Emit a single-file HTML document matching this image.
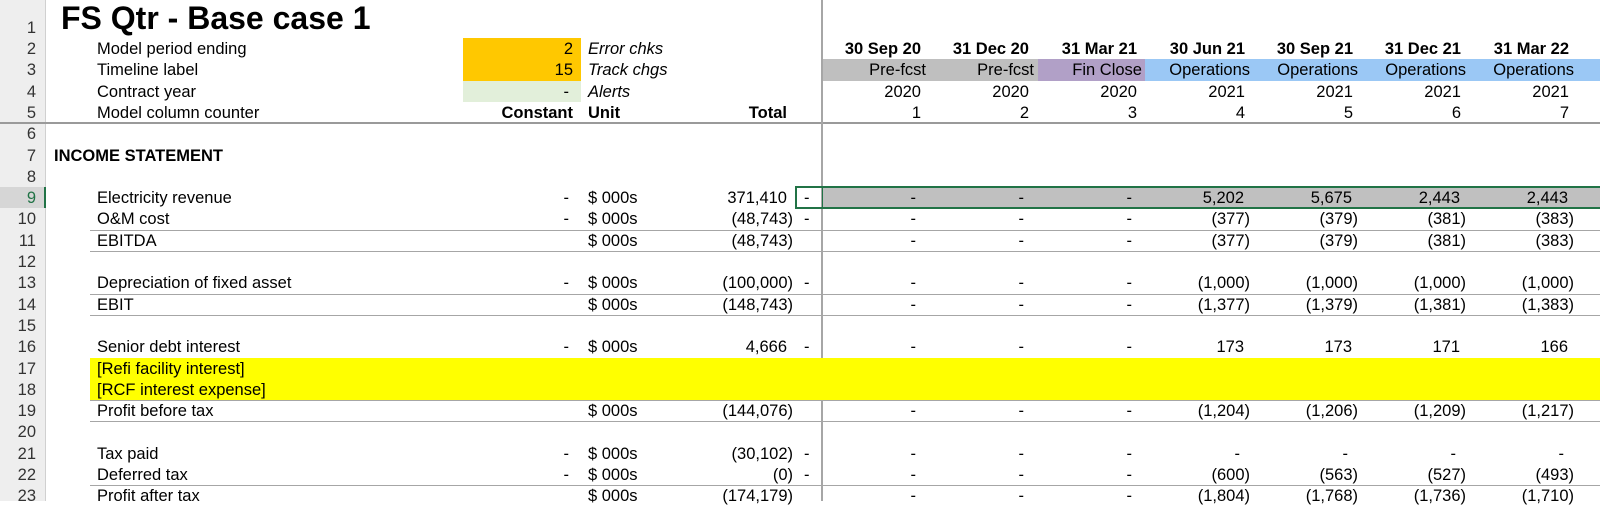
<!DOCTYPE html>
<html><head><meta charset="utf-8"><style>
*{margin:0;padding:0;box-sizing:border-box}
body{width:1600px;height:501px;overflow:hidden;background:#fff;font-family:"Liberation Sans",Arial,sans-serif;font-size:16.5px;color:#000;position:relative}
.a{position:absolute}
.row{position:absolute;left:0;width:1600px;height:21.3px}
.row>span{position:absolute;top:0;line-height:22px;white-space:nowrap}
.h{left:0;width:46px;text-align:right;padding-right:10px;color:#333}
.b{left:97px}.u{left:588px}.d{left:804px}
.k{right:1021px}.t{right:807px}
.n1{right:674px}.n2{right:566px}.n3{right:458px}.n4{right:350px}.n5{right:242px}.n6{right:134px}.n7{right:26px}
.p{margin-right:6px}.z{margin-right:10px}.q{margin-right:5px}
.bo{font-weight:bold}.it{font-style:italic}
.ln{position:absolute;left:90px;width:1510px;height:1px;background:#a6a6a6}
</style></head><body>
<div class="a" style="left:0;top:0;width:46px;height:501px;background:#eeeeee;border-right:1px solid #d0d0d0"></div>
<div class="a" style="left:0;top:187px;width:46px;height:21.3px;background:#d6d6d6;border-right:2px solid #217346"></div>
<div class="a" style="left:463px;top:38px;width:118px;height:42.6px;background:#ffc800"></div>
<div class="a" style="left:463px;top:80.6px;width:118px;height:21.3px;background:#e2efda"></div>
<div class="a" style="left:823px;top:59.3px;width:215px;height:21.3px;background:#bfbfbf"></div>
<div class="a" style="left:1038px;top:59.3px;width:107px;height:21.3px;background:#b1a0c7"></div>
<div class="a" style="left:1145px;top:59.3px;width:455px;height:21.3px;background:#9bc8f5"></div>
<div class="a" style="left:823px;top:187px;width:777px;height:21.3px;background:#c0c0c0"></div>
<div class="a" style="left:0;top:122px;width:1600px;height:2px;background:#9a9a9a"></div>
<div class="ln" style="top:229.7px"></div><div class="ln" style="top:251px"></div>
<div class="ln" style="top:293.6px"></div><div class="ln" style="top:314.9px"></div>
<div class="ln" style="top:400.1px"></div><div class="ln" style="top:421.4px"></div>
<div class="ln" style="top:485.3px"></div>
<div class="a" style="left:821px;top:0;width:2px;height:501px;background:#a6a6a6"></div>
<div class="a" style="left:90px;top:357.5px;width:1510px;height:42.6px;background:#ffff00"></div>
<div class="a" style="left:795px;top:186px;width:810px;height:23px;border:2px solid #217346"></div>
<div class="a" style="left:822px;top:188px;width:1px;height:19px;background:#217346"></div>

<div class="row" style="top:0;height:38px"><span class="h" style="top:17px">1</span><span class="bo" style="left:61px;top:0px;font-size:32px;line-height:36px">FS Qtr - Base case 1</span></div>

<div class="row" style="top:38px"><span class="h">2</span><span class="b">Model period ending</span><span class="k p">2</span><span class="u it">Error chks</span>
<span class="n1 bo q">30 Sep 20</span><span class="n2 bo q">31 Dec 20</span><span class="n3 bo q">31 Mar 21</span><span class="n4 bo q">30 Jun 21</span><span class="n5 bo q">30 Sep 21</span><span class="n6 bo q">31 Dec 21</span><span class="n7 bo q">31 Mar 22</span></div>

<div class="row" style="top:59.3px"><span class="h">3</span><span class="b">Timeline label</span><span class="k p">15</span><span class="u it">Track chgs</span>
<span class="n1">Pre-fcst</span><span class="n2">Pre-fcst</span><span class="n3">Fin Close</span><span class="n4">Operations</span><span class="n5">Operations</span><span class="n6">Operations</span><span class="n7">Operations</span></div>

<div class="row" style="top:80.6px"><span class="h">4</span><span class="b">Contract year</span><span class="k z">-</span><span class="u it">Alerts</span>
<span class="n1 q">2020</span><span class="n2 q">2020</span><span class="n3 q">2020</span><span class="n4 q">2021</span><span class="n5 q">2021</span><span class="n6 q">2021</span><span class="n7 q">2021</span></div>

<div class="row" style="top:101.9px"><span class="h">5</span><span class="b">Model column counter</span><span class="k p bo">Constant</span><span class="u bo">Unit</span><span class="t p bo">Total</span>
<span class="n1 q">1</span><span class="n2 q">2</span><span class="n3 q">3</span><span class="n4 q">4</span><span class="n5 q">5</span><span class="n6 q">6</span><span class="n7 q">7</span></div>

<div class="row" style="top:123.2px"><span class="h">6</span></div>
<div class="row" style="top:144.5px"><span class="h">7</span><span class="bo" style="left:54px">INCOME STATEMENT</span></div>
<div class="row" style="top:165.8px"><span class="h">8</span></div>

<div class="row" style="top:187.1px"><span class="h" style="color:#217346">9</span><span class="b">Electricity revenue</span><span class="k z">-</span><span class="u">$ 000s</span><span class="t p">371,410</span><span class="d">-</span>
<span class="n1 z">-</span><span class="n2 z">-</span><span class="n3 z">-</span><span class="n4 p">5,202</span><span class="n5 p">5,675</span><span class="n6 p">2,443</span><span class="n7 p">2,443</span></div>

<div class="row" style="top:208.4px"><span class="h">10</span><span class="b">O&amp;M cost</span><span class="k z">-</span><span class="u">$ 000s</span><span class="t">(48,743)</span><span class="d">-</span>
<span class="n1 z">-</span><span class="n2 z">-</span><span class="n3 z">-</span><span class="n4">(377)</span><span class="n5">(379)</span><span class="n6">(381)</span><span class="n7">(383)</span></div>

<div class="row" style="top:229.7px"><span class="h">11</span><span class="b">EBITDA</span><span class="u">$ 000s</span><span class="t">(48,743)</span>
<span class="n1 z">-</span><span class="n2 z">-</span><span class="n3 z">-</span><span class="n4">(377)</span><span class="n5">(379)</span><span class="n6">(381)</span><span class="n7">(383)</span></div>

<div class="row" style="top:251px"><span class="h">12</span></div>

<div class="row" style="top:272.3px"><span class="h">13</span><span class="b">Depreciation of fixed asset</span><span class="k z">-</span><span class="u">$ 000s</span><span class="t">(100,000)</span><span class="d">-</span>
<span class="n1 z">-</span><span class="n2 z">-</span><span class="n3 z">-</span><span class="n4">(1,000)</span><span class="n5">(1,000)</span><span class="n6">(1,000)</span><span class="n7">(1,000)</span></div>

<div class="row" style="top:293.6px"><span class="h">14</span><span class="b">EBIT</span><span class="u">$ 000s</span><span class="t">(148,743)</span>
<span class="n1 z">-</span><span class="n2 z">-</span><span class="n3 z">-</span><span class="n4">(1,377)</span><span class="n5">(1,379)</span><span class="n6">(1,381)</span><span class="n7">(1,383)</span></div>

<div class="row" style="top:314.9px"><span class="h">15</span></div>

<div class="row" style="top:336.2px"><span class="h">16</span><span class="b">Senior debt interest</span><span class="k z">-</span><span class="u">$ 000s</span><span class="t p">4,666</span><span class="d">-</span>
<span class="n1 z">-</span><span class="n2 z">-</span><span class="n3 z">-</span><span class="n4 p">173</span><span class="n5 p">173</span><span class="n6 p">171</span><span class="n7 p">166</span></div>

<div class="row" style="top:357.5px"><span class="h">17</span><span class="b">[Refi facility interest]</span></div>
<div class="row" style="top:378.8px"><span class="h">18</span><span class="b">[RCF interest expense]</span></div>

<div class="row" style="top:400.1px"><span class="h">19</span><span class="b">Profit before tax</span><span class="u">$ 000s</span><span class="t">(144,076)</span>
<span class="n1 z">-</span><span class="n2 z">-</span><span class="n3 z">-</span><span class="n4">(1,204)</span><span class="n5">(1,206)</span><span class="n6">(1,209)</span><span class="n7">(1,217)</span></div>

<div class="row" style="top:421.4px"><span class="h">20</span></div>

<div class="row" style="top:442.7px"><span class="h">21</span><span class="b">Tax paid</span><span class="k z">-</span><span class="u">$ 000s</span><span class="t">(30,102)</span><span class="d">-</span>
<span class="n1 z">-</span><span class="n2 z">-</span><span class="n3 z">-</span><span class="n4 z">-</span><span class="n5 z">-</span><span class="n6 z">-</span><span class="n7 z">-</span></div>

<div class="row" style="top:464px"><span class="h">22</span><span class="b">Deferred tax</span><span class="k z">-</span><span class="u">$ 000s</span><span class="t">(0)</span><span class="d">-</span>
<span class="n1 z">-</span><span class="n2 z">-</span><span class="n3 z">-</span><span class="n4">(600)</span><span class="n5">(563)</span><span class="n6">(527)</span><span class="n7">(493)</span></div>

<div class="row" style="top:485.3px"><span class="h">23</span><span class="b">Profit after tax</span><span class="u">$ 000s</span><span class="t">(174,179)</span>
<span class="n1 z">-</span><span class="n2 z">-</span><span class="n3 z">-</span><span class="n4">(1,804)</span><span class="n5">(1,768)</span><span class="n6">(1,736)</span><span class="n7">(1,710)</span></div>
</body></html>
